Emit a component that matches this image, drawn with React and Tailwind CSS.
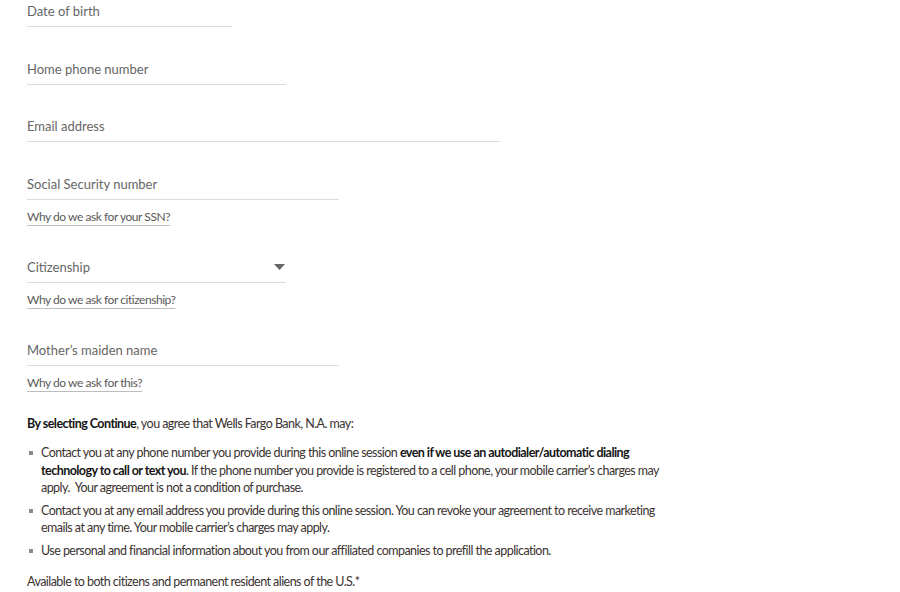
export default function App() {
  const fields = [
    { label: "Date of birth", w: "w-[205px]", mt: "mt-[1px]" },
    { label: "Home phone number", w: "w-[259px]", mt: "mt-[32px]" },
    { label: "Email address", w: "w-[473px]", mt: "mt-[31px]" },
  ];

  const link = "text-[#5a5a5a] underline decoration-[#bdbdbd] underline-offset-[4px]";
  const label = "border-b border-[#dcdcdc] pb-[5px] text-[13px] leading-[20px] text-[#666]";
  const bold = "font-bold text-[#141414]";

  return (
    <div className="min-h-[592px] bg-white pl-[27px] font-['Lato','Liberation_Sans',sans-serif] text-[#3b3331]">
      {fields.map((f) => (
        <div key={f.label} className={`${f.w} ${f.mt} ${label}`}>
          {f.label}
        </div>
      ))}

      <div className={`mt-[32px] w-[312px] ${label}`}>Social Security number</div>
      <div className="mt-[7px] text-[12px] leading-[19px] tracking-[-0.45px]">
        <a className={link}>Why do we ask for your SSN?</a>
      </div>

      <div className={`mt-[31px] flex w-[259px] items-center justify-between ${label}`}>
        <span>Citizenship</span>
        <svg width="11" height="6" viewBox="0 0 11 6" className="mr-[1px]">
          <path d="M0 0h11L5.5 6z" fill="#666" />
        </svg>
      </div>
      <div className="mt-[7px] text-[12px] leading-[19px] tracking-[-0.45px]">
        <a className={link}>Why do we ask for citizenship?</a>
      </div>

      <div className={`mt-[31px] w-[312px] ${label}`}>Mother’s maiden name</div>
      <div className="mt-[7px] text-[12px] leading-[19px] tracking-[-0.45px]">
        <a className={link}>Why do we ask for this?</a>
      </div>

      <div className="text-[12.5px] tracking-[-0.55px]">
        <p className="mt-[22px] leading-[20px]">
          <b className={bold}>By selecting Continue</b>, you agree that Wells Fargo Bank, N.A. may:
        </p>

        <ul className="mt-[10px] flex flex-col gap-[5px] leading-[17.5px]">
          <li className="flex">
            <span className="ml-[2px] mr-[8px] mt-[7px] h-[4px] w-[4px] shrink-0 bg-[#8a8a8a]" />
            <span className="whitespace-nowrap">
              Contact you at any phone number you provide during this online session{" "}
              <b className={bold}>even if we use an autodialer/automatic dialing</b>
              <br />
              <b className={bold}>technology to call or text you</b>. If the phone number you provide is registered to a cell phone, your mobile carrier’s charges may
              <br />
              apply.&nbsp; Your agreement is not a condition of purchase.
            </span>
          </li>
          <li className="flex">
            <span className="ml-[2px] mr-[8px] mt-[7px] h-[4px] w-[4px] shrink-0 bg-[#8a8a8a]" />
            <span className="whitespace-nowrap">
              Contact you at any email address you provide during this online session. You can revoke your agreement to receive marketing
              <br />
              emails at any time. Your mobile carrier’s charges may apply.
            </span>
          </li>
          <li className="flex">
            <span className="ml-[2px] mr-[8px] mt-[7px] h-[4px] w-[4px] shrink-0 bg-[#8a8a8a]" />
            <span className="whitespace-nowrap">
              Use personal and financial information about you from our affiliated companies to prefill the application.
            </span>
          </li>
        </ul>

        <p className="mt-[14px] leading-[18px]">Available to both citizens and permanent resident aliens of the U.S.*</p>
      </div>
    </div>
  );
}
